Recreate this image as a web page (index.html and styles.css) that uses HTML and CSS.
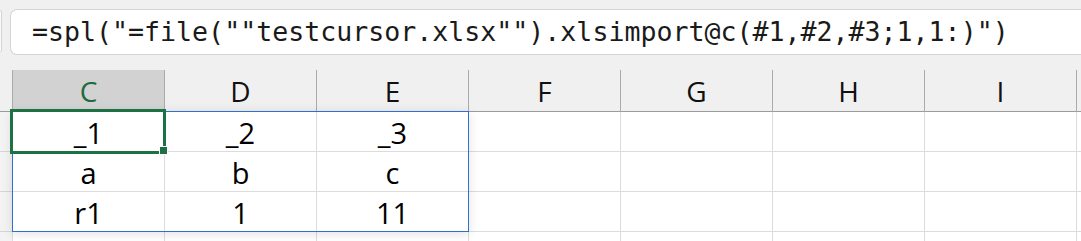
FILE: index.html
```
<!DOCTYPE html>
<html>
<head>
<link rel="stylesheet" href="styles.css">
</head>
<body>
<div class="formula-row">
  <div class="namebox"></div>
  <div class="formula">=spl("=file(""testcursor.xlsx"").xlsimport@c(#1,#2,#3;1,1:)")</div>
</div>
<div class="sheet">
  <div class="grid">
    <div class="corner"></div>
    <div class="colhead active">C</div>
    <div class="colhead">D</div>
    <div class="colhead">E</div>
    <div class="colhead">F</div>
    <div class="colhead">G</div>
    <div class="colhead">H</div>
    <div class="colhead">I</div>
    <div class="colhead"></div>

    <div class="rowhead"></div>
    <div class="cell">_1</div>
    <div class="cell">_2</div>
    <div class="cell">_3</div>
    <div class="cell"></div>
    <div class="cell"></div>
    <div class="cell"></div>
    <div class="cell"></div>
    <div class="cell"></div>

    <div class="rowhead"></div>
    <div class="cell">a</div>
    <div class="cell">b</div>
    <div class="cell">c</div>
    <div class="cell"></div>
    <div class="cell"></div>
    <div class="cell"></div>
    <div class="cell"></div>
    <div class="cell"></div>

    <div class="rowhead"></div>
    <div class="cell">r1</div>
    <div class="cell">1</div>
    <div class="cell">11</div>
    <div class="cell"></div>
    <div class="cell"></div>
    <div class="cell"></div>
    <div class="cell"></div>
    <div class="cell"></div>

    <div class="rowhead"></div>
    <div class="cell"></div>
    <div class="cell"></div>
    <div class="cell"></div>
    <div class="cell"></div>
    <div class="cell"></div>
    <div class="cell"></div>
    <div class="cell"></div>
    <div class="cell"></div>
  </div>
  <div class="range"></div>
  <div class="selection"></div>
  <div class="handle"></div>
</div>
</body>
</html>
```

FILE: styles.css
```
html, body {
  margin: 0;
  padding: 0;
  overflow: hidden;
  background: #f0f0f0;
}
body {
  width: 1081px;
  height: 241px;
}
.formula-row {
  display: flex;
  height: 70px;
  overflow: hidden;
}
.namebox {
  flex: 0 0 2px;
  box-sizing: border-box;
  margin-top: 10px;
  margin-right: 8px;
  height: 42px;
  border: 1px solid #d4d4d4;
  border-left: none;
  border-radius: 0 6px 6px 0;
  background: #fafafa;
}
.formula {
  flex: 1;
  box-sizing: border-box;
  margin-top: 9px;
  height: 46px;
  border: 1px solid #d4d4d4;
  border-right: none;
  border-radius: 7px 0 0 7px;
  background: #fff;
  padding-left: 21px;
  font-family: "DejaVu Sans Mono", monospace;
  font-size: 26.6px;
  line-height: 44px;
  color: #1a1a1a;
  white-space: pre;
  overflow: hidden;
}
.sheet {
  position: relative;
  height: 171px;
  overflow: hidden;
}
.grid {
  display: grid;
  grid-template-columns: 12px repeat(7, 152px) 5px;
  font-family: "Open Sans", sans-serif;
}
.corner {
  height: 41px;
  border-bottom: 1px solid #9c9c9c;
}
.colhead {
  height: 41px;
  border-left: 1px solid #ababab;
  border-bottom: 1px solid #9c9c9c;
  text-align: center;
  font-size: 28px;
  line-height: 43px;
  color: #111;
}
.colhead.active {
  background: #d2d2d2;
  color: #1e6b41;
}
.rowhead {
  height: 39px;
  border-bottom: 1px solid #d6d6d6;
  background: #f3f3f3;
}
.cell {
  height: 39px;
  background: #fff;
  border-left: 1px solid #dcdcdc;
  border-bottom: 1px solid #dcdcdc;
  text-align: center;
  font-size: 29px;
  line-height: 42px;
  color: #000;
}
.range {
  position: absolute;
  left: 12px;
  top: 41px;
  width: 457px;
  height: 121px;
  box-sizing: border-box;
  border: 1px solid #2f6fd0;
  box-shadow: 0 2px 10px rgba(0, 0, 0, 0.12);
}
.selection {
  position: absolute;
  left: 10px;
  top: 39px;
  width: 156px;
  height: 45px;
  box-sizing: border-box;
  border: 3px solid #1e7145;
}
.handle {
  position: absolute;
  left: 159px;
  top: 76px;
  width: 7px;
  height: 7px;
  background: #1e7145;
  border: 1px solid #fff;
}
```
